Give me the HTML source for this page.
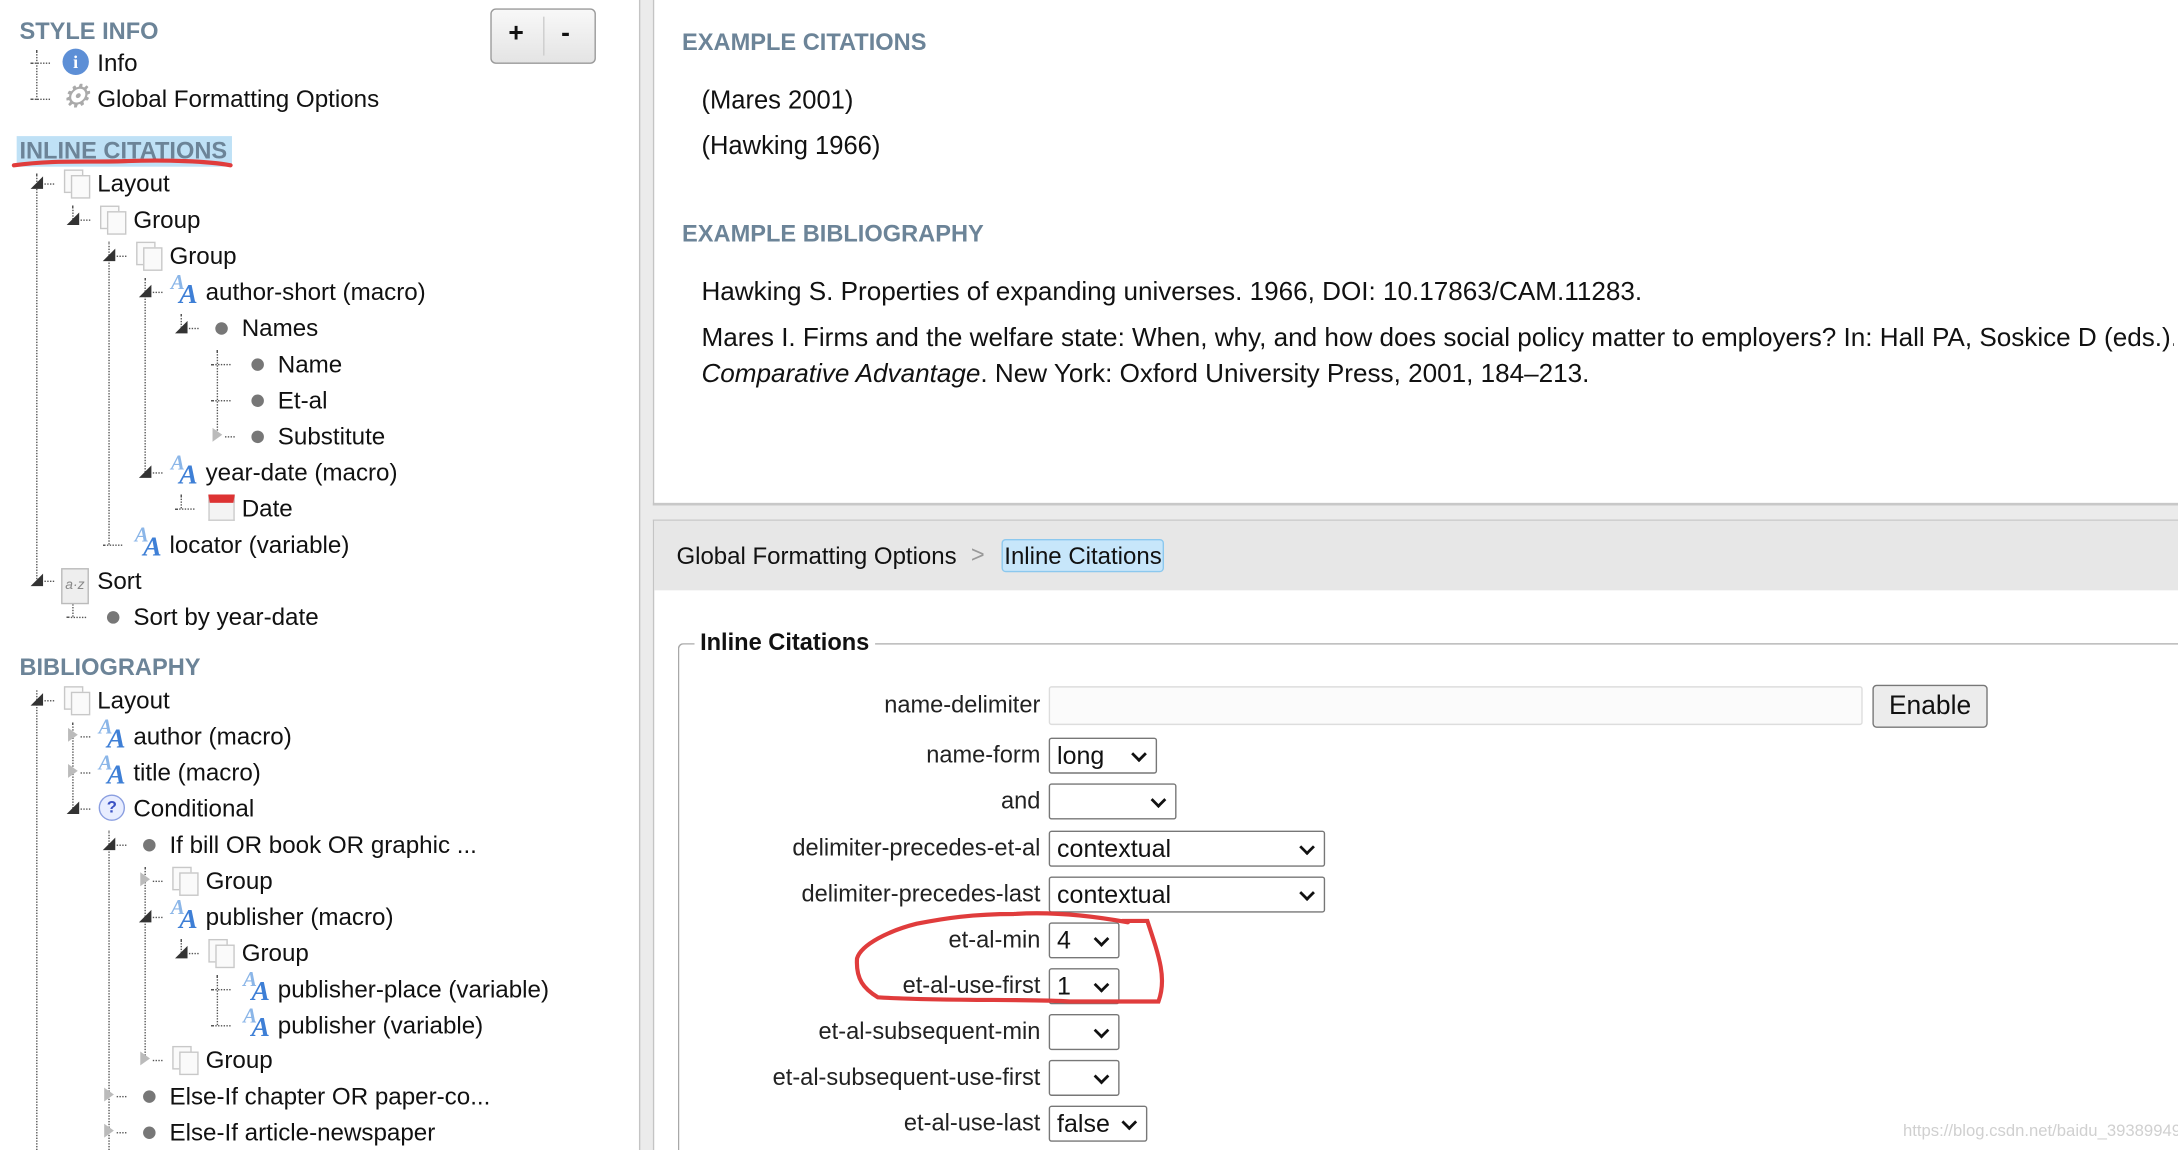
<!DOCTYPE html>
<html><head><meta charset="utf-8">
<style>
html,body{margin:0;padding:0;width:2178px;height:1150px;overflow:hidden;background:#fff;}
#w{position:absolute;left:0;top:0;width:1568px;height:828px;transform:scale(1.38903);transform-origin:0 0;font-family:"Liberation Sans",Arial,sans-serif;color:#111;overflow:hidden;}
.a{position:absolute;white-space:nowrap;}
.h{position:absolute;font-weight:bold;color:#6c8498;font-size:17px;}
.r{position:absolute;height:22px;line-height:22px;font-size:17.4px;white-space:nowrap;display:flex;align-items:center;margin-left:2px;margin-top:-1px;}
.tg{width:22px;height:22px;position:relative;display:inline-block;}
.tg.o:before{content:"";position:absolute;left:0px;top:6px;border-left:9px solid transparent;border-bottom:9px solid #333;}
.tg.c:before{content:"";position:absolute;left:1px;top:5px;border-top:5px solid transparent;border-bottom:5px solid transparent;border-left:7px solid #bbb;}
.tg:after{content:"";position:absolute;left:10px;top:11px;width:7px;border-top:1px dotted #555;}
.tg.l:after{left:0px;width:14px;}
.ic{width:26px;height:22px;display:inline-block;position:relative;}
.pg:before,.pg:after{content:"";position:absolute;width:12px;height:15px;border:1px solid #c8c8c8;background:#fafafa;}
.pg:before{left:2px;top:1px;}.pg:after{left:7px;top:5px;}
.bl:before{content:"";position:absolute;left:7px;top:7px;width:9px;height:9px;border-radius:50%;background:#777;}
.mc:before{content:"A";position:absolute;left:1px;top:-3px;font:italic bold 15px "Liberation Serif",serif;color:#8bb6e8;}
.mc:after{content:"A";position:absolute;left:7px;top:2px;font:italic bold 20px "Liberation Serif",serif;color:#3e7fd6;}
.in:before{content:"i";position:absolute;left:1px;top:1px;width:19px;height:19px;border-radius:50%;background:#5d8fd6;color:#fff;font:bold 13px/19px "Liberation Serif",serif;text-align:center;}
.gr:before{content:"⚙";position:absolute;left:0;top:-2px;font-size:23px;color:#aaa;}
.q:before{content:"?";position:absolute;left:1px;top:1px;width:17px;height:17px;border-radius:50%;border:1px solid #8a9ee0;background:#e8edff;color:#3b52c4;font:bold 12px/17px "Liberation Sans";text-align:center;}
.dt:before{content:"";position:absolute;left:2px;top:1px;width:19px;height:19px;background:#f4f4f4;border:1px solid #ccc;border-top:6px solid #d33;box-sizing:border-box;}
.az:before{content:"a·z";position:absolute;left:0;top:2px;font-size:10px;color:#888;border:1px solid #bbb;background:#eee;padding:1px 2px;}
.vl{position:absolute;border-left:1px dotted #555;width:0;}
.lab{position:absolute;right:819px;font-size:17px;color:#222;text-align:right;}
.sel{position:absolute;left:755px;border:1px solid #777;border-radius:2px;background:#fff;font-size:18px;line-height:24px;padding-left:5px;box-sizing:border-box;height:26px;}
.sel:after{content:"";position:absolute;right:8px;top:7px;width:6px;height:6px;border-right:2px solid #111;border-bottom:2px solid #111;transform:rotate(45deg);}
.bib{font-size:18.8px;}
</style></head><body><div id="w">
<div class="h" style="left:14px;top:13px">STYLE INFO</div>
<div class="a" style="left:353px;top:6px;width:74px;height:38px;border:1px solid #999;border-radius:4px;background:linear-gradient(#f8f8f8,#e4e4e4);"></div>
<div class="a" style="left:391px;top:12px;height:28px;border-left:1px solid #ccc"></div>
<div class="a" style="left:366px;top:14px;font-size:19px;font-weight:bold">+</div>
<div class="a" style="left:404px;top:14px;font-size:19px;font-weight:bold">-</div>

<div class="vl" style="left:26px;top:36px;height:36px"></div>
<div class="r" style="left:20px;top:35px"><i class="tg l"></i><i class="ic in"></i>Info</div>
<div class="r" style="left:20px;top:61px"><i class="tg l"></i><i class="ic gr"></i>Global Formatting Options</div>

<div class="a" style="left:12px;top:98px;width:155px;height:22px;background:#bfe1f6;"></div>
<div class="h" style="left:14px;top:99px">INLINE CITATIONS</div>

<div class="vl" style="left:26px;top:125px;height:292px"></div>
<div class="vl" style="left:52px;top:148px;height:12px"></div>
<div class="vl" style="left:78px;top:174px;height:218px"></div>
<div class="vl" style="left:104px;top:200px;height:140px"></div>
<div class="vl" style="left:130px;top:226px;height:12px"></div>
<div class="vl" style="left:156px;top:252px;height:62px"></div>
<div class="vl" style="left:130px;top:356px;height:10px"></div>
<div class="vl" style="left:52px;top:432px;height:12px"></div>

<div class="r" style="left:20px;top:122px"><i class="tg o"></i><i class="ic pg"></i>Layout</div>
<div class="r" style="left:46px;top:148px"><i class="tg o"></i><i class="ic pg"></i>Group</div>
<div class="r" style="left:72px;top:174px"><i class="tg o"></i><i class="ic pg"></i>Group</div>
<div class="r" style="left:98px;top:200px"><i class="tg o"></i><i class="ic mc"></i>author-short (macro)</div>
<div class="r" style="left:124px;top:226px"><i class="tg o"></i><i class="ic bl"></i>Names</div>
<div class="r" style="left:150px;top:252px"><i class="tg l"></i><i class="ic bl"></i>Name</div>
<div class="r" style="left:150px;top:278px"><i class="tg l"></i><i class="ic bl"></i>Et-al</div>
<div class="r" style="left:150px;top:304px"><i class="tg c"></i><i class="ic bl"></i>Substitute</div>
<div class="r" style="left:98px;top:330px"><i class="tg o"></i><i class="ic mc"></i>year-date (macro)</div>
<div class="r" style="left:124px;top:356px"><i class="tg l"></i><i class="ic dt"></i>Date</div>
<div class="r" style="left:72px;top:382px"><i class="tg l"></i><i class="ic mc"></i>locator (variable)</div>
<div class="r" style="left:20px;top:408px"><i class="tg o"></i><i class="ic az"></i>Sort</div>
<div class="r" style="left:46px;top:434px"><i class="tg l"></i><i class="ic bl"></i>Sort by year-date</div>

<div class="h" style="left:14px;top:471px">BIBLIOGRAPHY</div>
<div class="vl" style="left:26px;top:497px;height:331px"></div>
<div class="vl" style="left:52px;top:520px;height:62px"></div>
<div class="vl" style="left:78px;top:598px;height:230px"></div>
<div class="vl" style="left:104px;top:624px;height:140px"></div>
<div class="vl" style="left:130px;top:676px;height:10px"></div>
<div class="vl" style="left:156px;top:702px;height:36px"></div>
<div class="r" style="left:20px;top:494px"><i class="tg o"></i><i class="ic pg"></i>Layout</div>
<div class="r" style="left:46px;top:520px"><i class="tg c"></i><i class="ic mc"></i>author (macro)</div>
<div class="r" style="left:46px;top:546px"><i class="tg c"></i><i class="ic mc"></i>title (macro)</div>
<div class="r" style="left:46px;top:572px"><i class="tg o"></i><i class="ic q"></i>Conditional</div>
<div class="r" style="left:72px;top:598px"><i class="tg o"></i><i class="ic bl"></i>If bill OR book OR graphic ...</div>
<div class="r" style="left:98px;top:624px"><i class="tg c"></i><i class="ic pg"></i>Group</div>
<div class="r" style="left:98px;top:650px"><i class="tg o"></i><i class="ic mc"></i>publisher (macro)</div>
<div class="r" style="left:124px;top:676px"><i class="tg o"></i><i class="ic pg"></i>Group</div>
<div class="r" style="left:150px;top:702px"><i class="tg l"></i><i class="ic mc"></i>publisher-place (variable)</div>
<div class="r" style="left:150px;top:728px"><i class="tg l"></i><i class="ic mc"></i>publisher (variable)</div>
<div class="r" style="left:98px;top:753px"><i class="tg c"></i><i class="ic pg"></i>Group</div>
<div class="r" style="left:72px;top:779px"><i class="tg c"></i><i class="ic bl"></i>Else-If chapter OR paper-co...</div>
<div class="r" style="left:72px;top:805px"><i class="tg c"></i><i class="ic bl"></i>Else-If article-newspaper</div>

<div class="a" style="left:460px;top:0;width:11px;height:828px;background:#ebebeb;border-left:1px solid #c4c4c4;box-sizing:border-box"></div>
<div class="a" style="left:470px;top:0;width:1098px;height:364px;background:#fff;border-left:1px solid #c4c4c4;border-bottom:2px solid #c8c8c8;box-sizing:border-box"></div>
<div class="a" style="left:470px;top:364px;width:1098px;height:10px;background:#ebebeb"></div>
<div class="a" style="left:470px;top:374px;width:1098px;height:454px;background:#fff;border-left:1px solid #c4c4c4;border-top:1px solid #c8c8c8;box-sizing:border-box"></div>
<div class="a" style="left:471px;top:375px;width:1097px;height:50px;background:#e7e7e7"></div>

<div class="h" style="left:491px;top:21px">EXAMPLE CITATIONS</div>
<div class="a" style="left:505px;top:61px;font-size:18.4px">(Mares 2001)</div>
<div class="a" style="left:505px;top:94px;font-size:18.4px">(Hawking 1966)</div>
<div class="h" style="left:491px;top:159px">EXAMPLE BIBLIOGRAPHY</div>
<div class="a bib" style="left:505px;top:199px">Hawking S. Properties of expanding universes. 1966, DOI: 10.17863/CAM.11283.</div>
<div class="a bib" style="left:505px;top:232px;width:1060px;overflow:hidden">Mares I. Firms and the welfare state: When, why, and how does social policy matter to employers? In: Hall PA, Soskice D (eds.).</div>
<div class="a bib" style="left:505px;top:258px"><i>Comparative Advantage</i>. New York: Oxford University Press, 2001, 184–213.</div>

<div class="a" style="left:487px;top:390px;font-size:17.3px">Global Formatting Options</div>
<div class="a" style="left:699px;top:390px;font-size:17px;color:#999">&gt;</div>
<div class="a" style="left:721px;top:388px;font-size:17.3px;background:#c7e6fa;border:1px solid #8cc8ee;border-radius:3px;padding:1px 1px 0 1px;">Inline Citations</div>

<div class="a" style="left:488px;top:463px;width:1080px;height:365px;border-left:1px solid #a8a8a8;border-top:1px solid #a8a8a8;border-top-left-radius:4px;box-sizing:border-box"></div>
<div class="a" style="left:500px;top:453px;font-size:17px;font-weight:bold;background:#fff;padding:0 4px">Inline Citations</div>

<div class="lab" style="top:498px">name-delimiter</div>
<div class="a" style="left:755px;top:494px;width:586px;height:28px;border:1px solid #ddd;border-radius:2px;background:#fbfbfb;box-sizing:border-box"></div>
<div class="a" style="left:1348px;top:493px;width:83px;height:31px;border:1px solid #777;border-radius:3px;background:#ececec;box-sizing:border-box;font-size:19px;text-align:center;line-height:29px">Enable</div>
<div class="lab" style="top:534px">name-form</div>
<div class="sel" style="top:531px;width:78px">long</div>
<div class="lab" style="top:567px">and</div>
<div class="sel" style="top:564px;width:92px"></div>
<div class="lab" style="top:601px">delimiter-precedes-et-al</div>
<div class="sel" style="top:598px;width:199px">contextual</div>
<div class="lab" style="top:634px">delimiter-precedes-last</div>
<div class="sel" style="top:631px;width:199px">contextual</div>
<div class="lab" style="top:667px">et-al-min</div>
<div class="sel" style="top:664px;width:51px">4</div>
<div class="lab" style="top:700px">et-al-use-first</div>
<div class="sel" style="top:697px;width:51px">1</div>
<div class="lab" style="top:733px">et-al-subsequent-min</div>
<div class="sel" style="top:730px;width:51px"></div>
<div class="lab" style="top:766px">et-al-subsequent-use-first</div>
<div class="sel" style="top:763px;width:51px"></div>
<div class="lab" style="top:799px">et-al-use-last</div>
<div class="sel" style="top:796px;width:71px">false</div>

<div class="a" style="left:1370px;top:807px;font-size:12px;color:#d0d0d0">https://blog.csdn.net/baidu_39389949</div>

<svg class="a" style="left:0;top:0" width="1568" height="828">
<path d="M10 119 C40 115 60 117 90 116 C120 115 150 116 166 119" stroke="#e03c3c" stroke-width="3" fill="none" stroke-linecap="round"/>
<path d="M812 664 C790 660 760 656 730 658 C700 658 680 661 660 665 C640 670 620 680 617 690 C616 705 622 712 632 718 C680 721 740 719 770 721 L834 721 C840 705 835 690 826 663 L808 663" stroke="#e03c3c" stroke-width="3" fill="none" stroke-linecap="round"/>
</svg>
</div></body></html>
